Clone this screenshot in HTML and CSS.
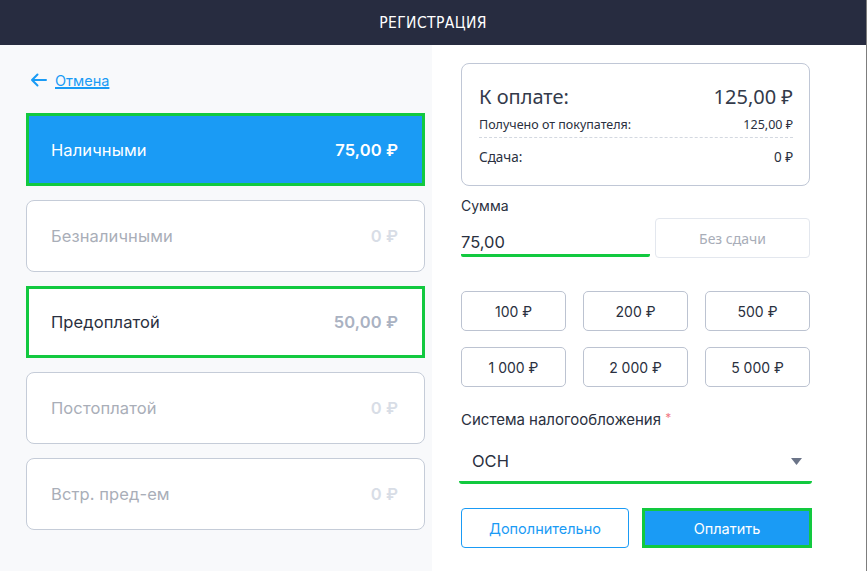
FILE: index.html
```html
<!DOCTYPE html>
<html lang="ru">
<head>
    <meta charset="UTF-8">
    <meta name="viewport" content="width=device-width, initial-scale=1.0">
    <title>Регистрация</title>
    <link rel="stylesheet" href="styles.css">
</head>
<body>
    <div class="window">
        <div class="header">РЕГИСТРАЦИЯ</div>

        <div class="main">
            <!-- Payment types -->
            <div class="pay-types">
                <a href="#" class="back">
                    <svg width="17" height="14" viewBox="0 0 17 14"><path d="M16 7H2M7.5 1.5L2 7l5.5 5.5" fill="none" stroke="#1a9bf5" stroke-width="2" stroke-linecap="round" stroke-linejoin="round"/></svg>
                    <span>Отмена</span>
                </a>

                <div class="pay-type active">
                    <span>Наличными</span>
                    <span class="amount">75,00 ₽</span>
                </div>
                <div class="pay-type disabled">
                    <span>Безналичными</span>
                    <span class="amount">0 ₽</span>
                </div>
                <div class="pay-type marked">
                    <span>Предоплатой</span>
                    <span class="amount">50,00 ₽</span>
                </div>
                <div class="pay-type disabled">
                    <span>Постоплатой</span>
                    <span class="amount">0 ₽</span>
                </div>
                <div class="pay-type disabled">
                    <span>Встр. пред-ем</span>
                    <span class="amount">0 ₽</span>
                </div>
            </div>

            <!-- Payment form -->
            <div class="pay-form">
                <div class="summary">
                    <div class="summary-row total">
                        <span>К оплате:</span>
                        <span>125,00 ₽</span>
                    </div>
                    <div class="summary-row small">
                        <span>Получено от покупателя:</span>
                        <span>125,00 ₽</span>
                    </div>
                    <div class="summary-row change">
                        <span>Сдача:</span>
                        <span>0 ₽</span>
                    </div>
                </div>

                <label class="field-label">Сумма</label>
                <div class="sum-line">
                    <div class="sum-input">75,00</div>
                    <button class="no-change">Без сдачи</button>
                </div>

                <div class="quick">
                    <button>100 ₽</button>
                    <button>200 ₽</button>
                    <button>500 ₽</button>
                    <button>1 000 ₽</button>
                    <button>2 000 ₽</button>
                    <button>5 000 ₽</button>
                </div>

                <label class="field-label tax">Система налогообложения <span class="req">*</span></label>
                <div class="select">
                    <span>ОСН</span>
                    <svg width="11" height="7" viewBox="0 0 11 7"><path d="M0 0h11L5.5 7z" fill="#6b7488"/></svg>
                </div>

                <div class="actions">
                    <button class="btn-outline">Дополнительно</button>
                    <button class="btn-pay">Оплатить</button>
                </div>
            </div>
        </div>
    </div>
</body>
</html>
```

FILE: styles.css
```css
body {
    margin: 0;
    padding: 0;
    background-color: #fff;
    font-family: "Noto Sans", sans-serif;
    color: #2a3040;
}
.window {
    width: 866px;
    height: 571px;
    border-right: 1px solid #7d7d7d;
    display: flex;
    flex-direction: column;
    overflow: hidden;
}
.header {
    height: 45px;
    flex-shrink: 0;
    background-color: #272c40;
    color: #fff;
    display: flex;
    justify-content: center;
    align-items: center;
    font-family: "DejaVu Sans Condensed", "Open Sans", sans-serif;
    font-size: 15.5px;
    letter-spacing: 0.4px;
    font-weight: 300;
}
.main {
    flex: 1;
    display: flex;
}
.pay-types {
    width: 432px;
    box-sizing: border-box;
    background-color: #f8f9fb;
    padding: 25px 7px 0 26px;
    font-family: Inter, sans-serif;
}
.back {
    display: flex;
    align-items: center;
    gap: 8px;
    margin-left: 4px;
    height: 20px;
    color: #1a9bf5;
    font-size: 14.5px;
    margin-bottom: 23px;
}
.back span {
    text-decoration: underline;
    text-underline-offset: 2px;
}
.pay-type {
    height: 72px;
    box-sizing: border-box;
    margin-bottom: 14px;
    border: 1px solid #c5ccd8;
    border-radius: 8px;
    background-color: #fff;
    display: flex;
    justify-content: space-between;
    align-items: center;
    padding: 0 26px 0 24px;
    font-size: 16.5px;
    letter-spacing: 0.1px;
}
.pay-type .amount {
    font-weight: 600;
}
.pay-type.active {
    height: 73px;
    background-color: #1a9bf5;
    border: 3px solid #12c93f;
    border-radius: 0;
    color: #fff;
    padding: 0 24px 0 22px;
}
.pay-type.marked {
    border: 3px solid #12c93f;
    border-radius: 0;
    color: #2a3040;
    padding: 0 24px 0 22px;
}
.pay-type.marked .amount {
    color: #aab2c2;
}
.pay-type.disabled {
    color: #a9aeb8;
}
.pay-type.disabled .amount {
    color: #d8dde6;
}
.pay-form {
    flex: 1;
    padding: 18px 56px 0 29px;
}
.summary {
    border: 1px solid #c0c7d6;
    border-radius: 8px;
    height: 123px;
    box-sizing: border-box;
    padding: 17px 16px 0 17px;
}
.summary-row {
    display: flex;
    justify-content: space-between;
    align-items: center;
}
.summary-row.total {
    font-size: 20px;
    height: 30px;
    color: #333a4a;
}
.summary-row.small {
    font-size: 12.5px;
    height: 22px;
    margin-top: 2px;
    border-bottom: 1px dashed #d3d8e0;
    padding-bottom: 2px;
}
.summary-row.change {
    font-size: 13.5px;
    height: 30px;
    margin-top: 4px;
}
.field-label {
    display: block;
    font-family: Inter, sans-serif;
    font-size: 14px;
    margin-top: 11px;
    color: #2a3040;
}
.sum-line {
    display: flex;
    align-items: flex-start;
    gap: 5px;
    margin-top: 4px;
}
.sum-input {
    width: 189px;
    height: 39px;
    box-sizing: border-box;
    padding-top: 12px;
    border-bottom: 3px solid #12c93f;
    border-radius: 0 0 2px 2px;
    font-family: Inter, sans-serif;
    font-size: 16.5px;
    line-height: 24px;
}
.no-change {
    flex: 1;
    height: 40px;
    border: 1px solid #e3e7ee;
    border-radius: 4px;
    background-color: #fff;
    color: #a8adb8;
    font-family: "Noto Sans", sans-serif;
    font-size: 14px;
}
.quick {
    display: grid;
    grid-template-columns: repeat(3, 105px);
    column-gap: 17px;
    row-gap: 16px;
    margin-top: 33px;
}
.quick button {
    height: 40px;
    border: 1px solid #bcc3d1;
    border-radius: 5px;
    background-color: #fff;
    color: #2a3040;
    font-family: Inter, sans-serif;
    font-size: 14px;
}
.field-label.tax {
    font-size: 15px;
    margin-top: 23px;
}
.req {
    color: #f07a85;
    font-size: 12px;
    vertical-align: top;
}
.select {
    display: flex;
    justify-content: space-between;
    align-items: center;
    height: 40px;
    margin: 12px -2px 0 -2px;
    padding: 0 10px 0 13px;
    border-bottom: 3px solid #12c93f;
    border-radius: 0 0 3px 3px;
    font-family: Inter, sans-serif;
    font-size: 16.5px;
}
.actions {
    display: flex;
    gap: 13px;
    margin-top: 24px;
}
.actions button {
    height: 40px;
    font-family: Inter, sans-serif;
    font-size: 14.5px;
}
.btn-outline {
    width: 168px;
    border: 1px solid #1a9bf5;
    border-radius: 4px;
    background-color: #fff;
    color: #1a9bf5;
}
.btn-pay {
    width: 170px;
    margin-right: -2px;
    border: 3px solid #12c93f;
    background-color: #1a9bf5;
    color: #fff;
}
```
